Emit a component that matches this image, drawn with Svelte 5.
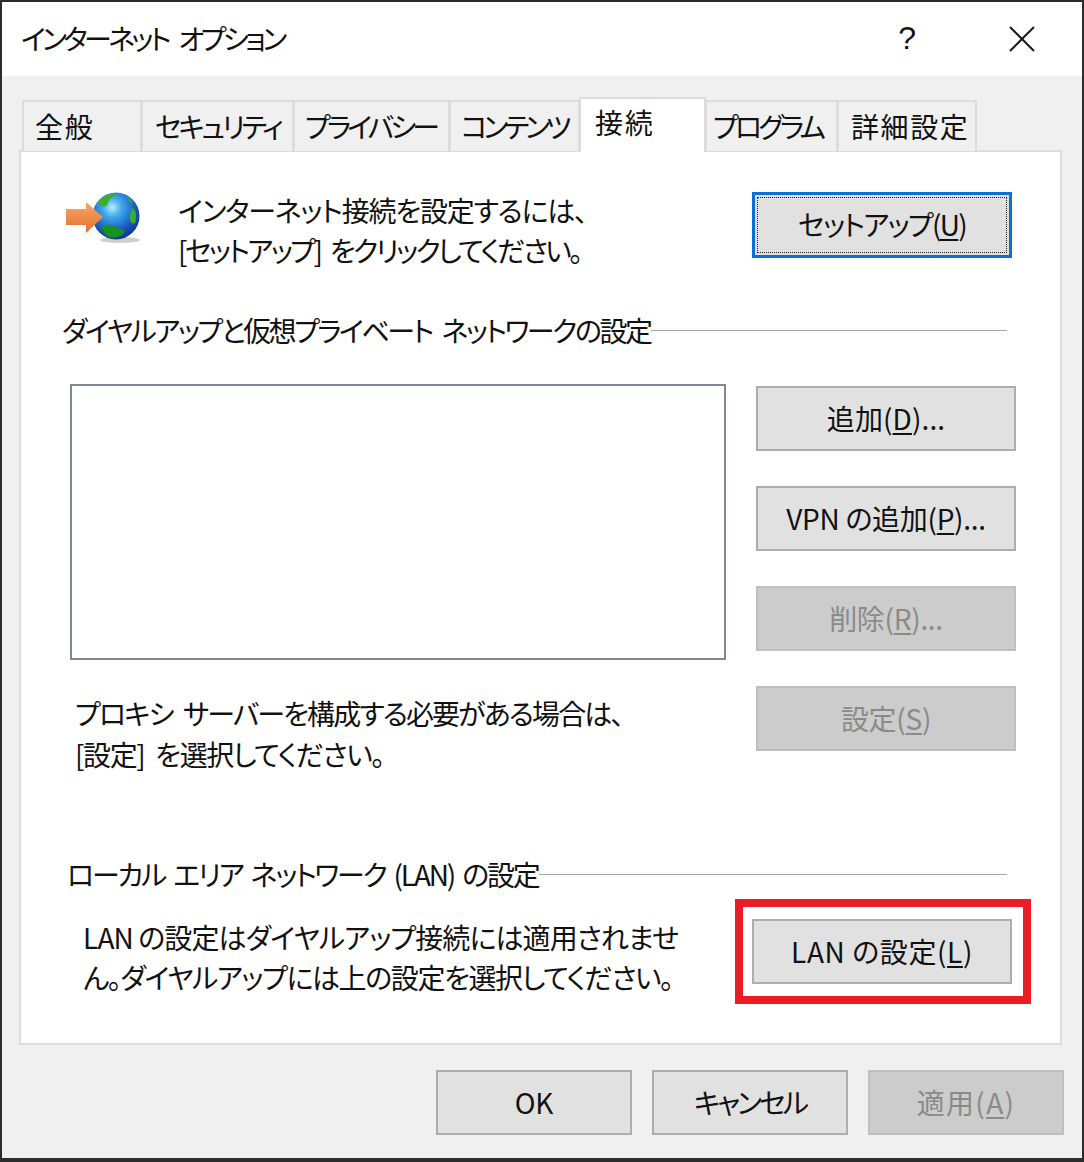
<script lang="ts">
  // pad and spacing differ per tab because the reference font has narrow kana
  const tabs = [
    { label: "全般", width: 120, pad: 11, spacing: 1.8 },
    { label: "セキュリティ", width: 153, pad: 12, spacing: -3.2 },
    { label: "プライバシー", width: 157, pad: 10, spacing: -3.8 },
    { label: "コンテンツ", width: 131, pad: 10, spacing: -4.3 },
    { label: "接続", width: 127, pad: 14, spacing: 1.8, active: true },
    { label: "プログラム", width: 133, pad: 6, spacing: -3.8 },
    { label: "詳細設定", width: 140, pad: 12, spacing: 1.6 }
  ];
</script>

<div class="dialog">
  <header class="titlebar">
    <span class="title">インターネット オプション</span>
    <span class="help">?</span>
    <svg class="close" viewBox="0 0 26 26" width="26" height="26" aria-hidden="true">
      <path d="M1 1 L25 25 M25 1 L1 25" stroke="#1a1a1a" stroke-width="2" fill="none" />
    </svg>
  </header>

  <main class="body">
    <div class="tabs">
      {#each tabs as tab}
        <div
          class="tab"
          class:active={tab.active}
          style="width: {tab.width}px; padding-left: {tab.pad}px; letter-spacing: {tab.spacing}px"
        >
          {tab.label}
        </div>
      {/each}
    </div>

    <section class="panel">
      <div class="setup-row">
        <svg class="globe" viewBox="0 0 76 56" width="76" height="56" aria-hidden="true">
          <defs>
            <radialGradient id="sea" cx="0.42" cy="0.32" r="0.72">
              <stop offset="0" stop-color="#b4f0fb" />
              <stop offset="0.28" stop-color="#3fa9ec" />
              <stop offset="0.68" stop-color="#1a5cc0" />
              <stop offset="1" stop-color="#10307e" />
            </radialGradient>
            <linearGradient id="arrow" x1="0" y1="0" x2="0" y2="1">
              <stop offset="0" stop-color="#f7a76c" />
              <stop offset="1" stop-color="#e56f2a" />
            </linearGradient>
            <filter id="soft" x="-20%" y="-20%" width="140%" height="140%">
              <feGaussianBlur stdDeviation="0.6" />
            </filter>
          </defs>
          <ellipse cx="55" cy="50" rx="20" ry="3" fill="#bcbcbc" opacity="0.7" filter="url(#soft)" />
          <g filter="url(#soft)">
            <circle cx="51" cy="26" r="23.5" fill="url(#sea)" />
            <path d="M33 12 C38 6 45 3 50 4 C48 8 44 8 43 13 C41 18 36 18 33 12Z" fill="#3cae2a" />
            <path d="M36 36 C42 33 50 36 60 41 C57 47 49 49 44 47 C40 45 38 41 36 36Z" fill="#169224" />
            <path d="M67 18 C71 19 72 27 70 33 C67 35 64 31 65 26Z" fill="#3cae2a" />
            <path d="M62 7 C65 9 67 11 68 14 C65 13 63 10 62 7Z" fill="#3cae2a" />
            <path d="M1 19 H21 V12 L38 27 L21 43 V35 H1Z" fill="url(#arrow)" />
          </g>
        </svg>
        <p class="setup-text">
          <span class="line ls-a">インターネット接続を設定するには、</span>
          <span class="line ls-b">[セットアップ] をクリックしてください。</span>
        </p>
        <button class="btn focused"><span class="focus-ring">セットアップ(<u>U</u>)</span></button>
      </div>

      <div class="group-title vpn-title"><span>ダイヤルアップと仮想プライベート ネットワークの設定</span><i></i></div>

      <div class="vpn-row">
        <div class="left-col">
          <div class="listbox"></div>
          <p class="proxy-text">
            <span class="line ls-c">プロキシ サーバーを構成する必要がある場合は、</span>
            <span class="line ls-d">[設定] を選択してください。</span>
          </p>
        </div>
        <div class="side-buttons">
          <button class="btn add">追加(<u>D</u>)...</button>
          <button class="btn">VPN の追加(<u>P</u>)...</button>
          <button class="btn disabled">削除(<u>R</u>)...</button>
          <button class="btn disabled">設定(<u>S</u>)</button>
        </div>
      </div>

      <div class="group-title lan-title"><span>ローカル エリア ネットワーク (LAN) の設定</span><i></i></div>

      <div class="lan-row">
        <p class="lan-text">
          <span class="line ls-e">LAN の設定はダイヤルアップ接続には適用されませ</span>
          <span class="line ls-f">ん。ダイヤルアップには上の設定を選択してください。</span>
        </p>
        <div class="lan-btn-wrap">
          <button class="btn lan-btn">LAN の設定(<u>L</u>)</button>
          <div class="highlight"></div>
        </div>
      </div>
    </section>

    <footer class="footer">
      <button class="btn">OK</button>
      <button class="btn cancel">キャンセル</button>
      <button class="btn disabled apply">適用(<u>A</u>)</button>
    </footer>
  </main>
</div>

<style>
  :global(body) {
    margin: 0;
    background: #fff;
  }

  .dialog {
    width: 1084px;
    height: 1162px;
    box-sizing: border-box;
    border: 2px solid #2c2c2c;
    border-bottom-width: 4px;
    display: flex;
    flex-direction: column;
    color: #111;
    font-family: "Noto Sans CJK JP", "Noto Sans", sans-serif;
    font-size: 28px;
    font-feature-settings: "palt";
    background: #f0f0f0;
  }

  .titlebar {
    height: 74px;
    flex: none;
    background: #fff;
    display: flex;
    align-items: center;
    padding: 0 47px 0 19px;
  }

  .title {
    flex: 1;
    letter-spacing: -3.6px;
    word-spacing: 8px;
    position: relative;
    top: -1px;
  }

  .help {
    font-family: "Liberation Sans", sans-serif;
    font-size: 32px;
    margin-right: 93px;
    position: relative;
    top: -1px;
  }

  .close {
    flex: none;
  }

  .body {
    flex: 1;
    display: flex;
    flex-direction: column;
    padding: 24px 20px 0 17px;
    min-height: 0;
  }

  .tabs {
    display: flex;
    align-items: flex-end;
    height: 51px;
    padding-left: 3px;
    margin-bottom: -1px;
    position: relative;
    z-index: 1;
  }

  .tab {
    box-sizing: border-box;
    height: 51px;
    border: 2px solid #dcdcdc;
    border-bottom: 0;
    background: #f0f0f0;
    line-height: 48px;
    white-space: nowrap;
    overflow: hidden;
    margin-right: -1px;
  }

  .tab.active {
    height: 55px;
    margin-bottom: -1px;
    background: #fff;
    line-height: 46px;
    position: relative;
  }

  .panel {
    height: 895px;
    box-sizing: border-box;
    background: #fff;
    border: 2px solid #dcdcdc;
    display: flex;
    flex-direction: column;
  }

  .setup-row {
    display: flex;
    align-items: flex-start;
    padding: 38px 48px 0 44px;
    height: 158px;
    box-sizing: border-box;
  }

  .globe {
    flex: none;
    margin-right: 37px;
  }

  p {
    margin: 0;
    line-height: 40px;
  }

  .line {
    display: block;
    white-space: nowrap;
  }

  .ls-a { letter-spacing: -1.2px; }
  .ls-b { letter-spacing: -2.6px; word-spacing: 6px; }
  .ls-c { letter-spacing: -1.9px; word-spacing: 6px; }
  .ls-d { letter-spacing: -1.4px; word-spacing: 6px; }
  .ls-e { letter-spacing: -0.9px; }
  .ls-f { letter-spacing: -1.4px; }

  .setup-text {
    flex: 1;
  }

  .btn {
    box-sizing: border-box;
    width: 260px;
    height: 65px;
    flex: none;
    padding: 0 0 2px;
    background: #e1e1e1;
    border: 2px solid #adadad;
    color: #111;
    font: inherit;
    font-feature-settings: inherit;
    letter-spacing: -0.3px;
  }

  .btn u {
    text-underline-offset: 3px;
  }

  .btn.disabled {
    background: #cccccc;
    border-color: #bfbfbf;
    color: #8a8a8a;
  }

  .btn.focused {
    height: 66px;
    border: 3px solid #0a6fd8;
    padding: 2px;
    margin-top: 2px;
    letter-spacing: -1.7px;
  }

  .btn.add {
    letter-spacing: 0.1px;
  }

  .btn.lan-btn {
    letter-spacing: 0.6px;
  }

  .btn.cancel {
    letter-spacing: -2.9px;
  }

  .btn.apply {
    letter-spacing: 1.3px;
  }

  .focus-ring {
    display: flex;
    align-items: center;
    justify-content: center;
    height: 100%;
    padding-bottom: 3px;
    border: 1px dotted #222;
    box-sizing: border-box;
  }

  .group-title {
    display: flex;
    align-items: center;
    white-space: nowrap;
    height: 40px;
    margin-right: 53px;
  }

  .group-title i {
    flex: 1;
    height: 1px;
    background: #a8a8a8;
  }

  .vpn-title {
    margin-left: 41px;
    letter-spacing: -2.45px;
    word-spacing: 6px;
  }

  .vpn-row {
    display: flex;
    justify-content: space-between;
    padding: 34px 44px 0 49px;
    height: 502px;
    box-sizing: border-box;
  }

  .left-col {
    width: 656px;
  }

  .listbox {
    box-sizing: border-box;
    height: 276px;
    background: #fff;
    border: 2px solid #7d8a96;
  }

  .proxy-text {
    margin: 33px 0 0 5px;
    line-height: 40.5px;
  }

  .side-buttons {
    display: flex;
    flex-direction: column;
    gap: 35px;
    padding-top: 2px;
  }

  .lan-title {
    margin-left: 46px;
    margin-top: 2px;
    letter-spacing: -2.2px;
    word-spacing: 4px;
  }

  .lan-row {
    display: flex;
    justify-content: space-between;
    align-items: flex-start;
    padding: 25px 48px 0 62px;
  }

  .lan-text {
    margin-top: -2px;
  }

  .lan-btn-wrap {
    position: relative;
    display: flex;
  }

  .highlight {
    position: absolute;
    inset: -20px -19px -20px -17px;
    border: 8px solid #ec1c24;
    pointer-events: none;
  }

  .footer {
    display: flex;
    justify-content: flex-end;
    gap: 20px;
    padding-top: 25px;
    margin-right: -2px;
  }

  .footer .btn {
    width: 196px;
  }
</style>
